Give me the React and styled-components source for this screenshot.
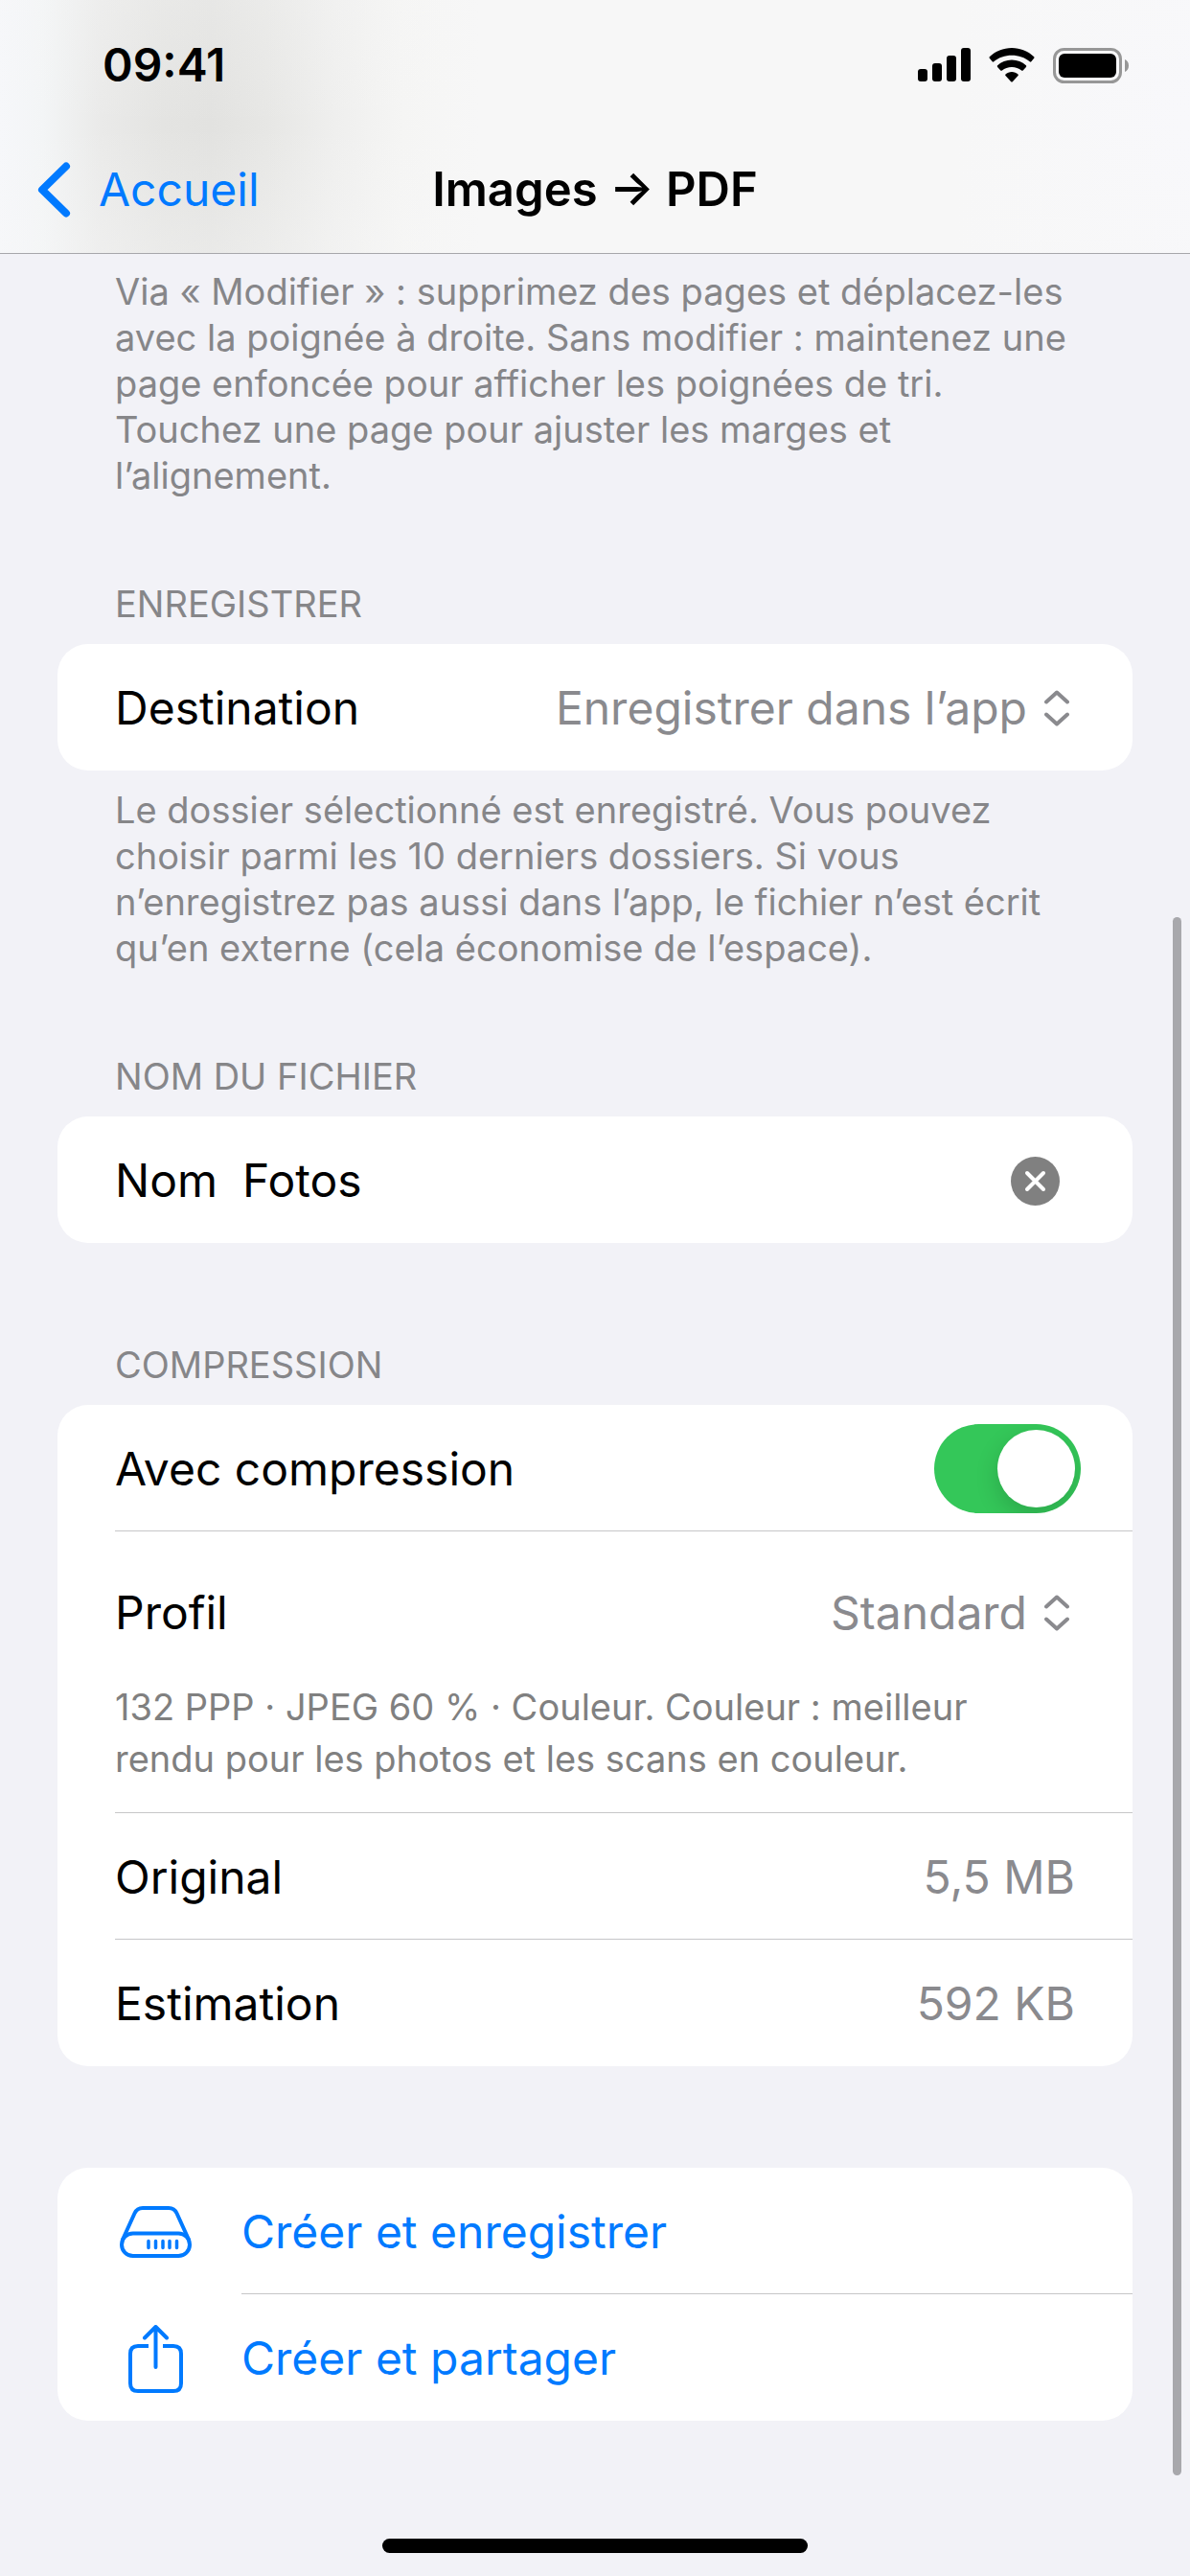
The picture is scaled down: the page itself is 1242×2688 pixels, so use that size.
import React, { useState } from 'react';
import styled, { createGlobalStyle } from 'styled-components';

const GlobalStyle = createGlobalStyle`
  * {
    box-sizing: border-box;
  }

  body {
    margin: 0;
    background-color: #f2f2f7;
    font-family: Inter, "Liberation Sans", sans-serif;
    font-size: 48px;
    line-height: 60px;
    color: #000;
  }

  button, input, select {
    margin: 0;
    padding: 0;
    border: 0;
    background: none;
    font: inherit;
    color: inherit;
  }
`;

const Screen = styled.div`
  position: relative;
  display: flex;
  flex-direction: column;
  min-height: 100vh;
`;

const Header = styled.header`
  border-bottom: 1px solid #a7a7ab;
  background:
    linear-gradient(180deg, rgba(247, 247, 247, 0.25), rgba(247, 247, 247, 0) 50%, rgba(247, 247, 247, 0.35)),
    linear-gradient(90deg, #f6f7fa, #f3f5f6 45px, #eaeae9 105px, #e4e4e2 170px, #e2e2e0 220px, #e7e7e5 280px, #efefee 350px, #f5f5f4 420px, #f7f7f7 500px, #f7f7f7 80%, #f8f8fb);
`;

const StatusBar = styled.div`
  display: flex;
  align-items: center;
  justify-content: space-between;
  height: 132px;
  padding: 4px 63px 0 107px;
  font-weight: 600;
`;

const StatusIcons = styled.div`
  display: flex;
  align-items: center;
  gap: 19px;
`;

const NavBar = styled.nav`
  display: grid;
  grid-template-columns: 1fr auto 1fr;
  align-items: center;
  height: 132px;
  padding: 0 39px;
`;

const BackLink = styled.a`
  display: flex;
  align-items: center;
  gap: 28px;
  color: #007aff;
  text-decoration: none;
`;

const Title = styled.h1`
  margin: 0;
  font-size: 49px;
  font-weight: 600;
`;

const Content = styled.main`
  flex: 1;
  padding: 15px 60px 0;
`;

const Section = styled.section`
  margin-bottom: ${({ $gap }) => $gap || 86}px;
`;

const SectionTitle = styled.h2`
  margin: 0;
  padding: 0 60px 18px;
  font-size: 38px;
  font-weight: 400;
  line-height: 48px;
  color: #868689;
  text-transform: uppercase;
`;

const Note = styled.p`
  margin: 0;
  padding: ${({ $top }) => $top}px 52px 0 60px;
  font-size: 38px;
  line-height: 48px;
  color: #868689;
`;

const Card = styled.div`
  overflow: hidden;
  border-radius: 32px;
  background-color: #fff;
`;

const Row = styled.div`
  display: flex;
  align-items: center;
  height: 132px;
  margin-left: 60px;
  padding-top: 2px;
  padding-right: ${({ $right }) => $right || 60}px;
  border-bottom: ${({ $last }) => ($last ? 'none' : '1px solid #c6c6c8')};
`;

const ProfileRow = styled.div`
  margin-left: 60px;
  padding: 19px 0 29px;
  border-bottom: 1px solid #c6c6c8;
`;

const ProfileLine = styled.div`
  display: flex;
  align-items: center;
  height: 132px;
  padding-right: 66px;
`;

const ProfileHint = styled.p`
  margin: 0;
  padding: 5px 60px 0 0;
  font-size: 38px;
  line-height: 54px;
  color: #808080;
`;

const Value = styled.span`
  margin-left: auto;
  color: #8a8a8e;
`;

const Picker = styled.select`
  flex: 1;
  min-width: 0;
  height: 72px;
  margin-right: 18px;
  appearance: none;
  outline: none;
  color: #8a8a8e;
  text-align-last: right;
`;

const NameInput = styled.input`
  flex: 1;
  min-width: 0;
  margin-left: 26px;
  outline: none;
`;

const ClearButton = styled.button`
  display: flex;
`;

const Toggle = styled.input`
  appearance: none;
  width: 153px;
  height: 93px;
  margin: 0 0 0 auto;
  padding: 6px;
  overflow: hidden;
  border-radius: 47px;
  background-color: ${({ checked }) => (checked ? '#34c759' : '#e9e9eb')};

  &::before {
    content: '';
    display: block;
    width: 81px;
    height: 81px;
    margin-left: ${({ checked }) => (checked ? 'auto' : '0')};
    border-radius: 50%;
    background-color: #fff;
    box-shadow: 0 9px 24px rgba(0, 0, 0, 0.16);
  }
`;

const ActionButton = styled.button`
  display: flex;
  align-items: center;
  width: 100%;
  height: 132px;
  padding-top: 2px;
  padding-left: 60px;
  color: #007aff;
  text-align: left;
`;

const ActionIcon = styled.span`
  display: flex;
  justify-content: center;
  width: 84px;
  margin-right: 48px;
`;

const ActionLabel = styled.span`
  display: flex;
  flex: 1;
  align-items: center;
  align-self: stretch;
  border-bottom: ${({ $last }) => ($last ? 'none' : '1px solid #c6c6c8')};
`;

const HomeIndicator = styled.div`
  width: 444px;
  height: 15px;
  margin: 0 auto 24px;
  border-radius: 8px;
  background-color: #000;
`;

const ScrollThumb = styled.div`
  position: absolute;
  top: 957px;
  right: 9px;
  bottom: 105px;
  width: 9px;
  border-radius: 5px;
  background-color: #a8a8ac;
`;

const SignalIcon = () => (
  <svg width="55" height="36" viewBox="0 0 55 36">
    <rect x="0" y="22" width="10" height="13" rx="3" />
    <rect x="15" y="16" width="10" height="19" rx="3" />
    <rect x="30" y="8" width="10" height="27" rx="3" />
    <rect x="45" y="0" width="10" height="35" rx="3" />
  </svg>
);

const WifiIcon = () => (
  <svg width="48" height="36" viewBox="0 0 48 36">
    <path d="M24 0C33 0 41 3.500 47.200 9.200Q48 10 47.200 10.800L44.300 14.300Q43.500 15 42.700 14.300C37.600 9.900 31.200 7.700 24 7.700S10.400 9.900 5.300 14.300Q4.500 15 3.700 14.300L0.800 10.800Q0 10 0.800 9.200C7 3.500 15 0 24 0Z" />
    <path d="M24 12.500C29.800 12.500 34.900 14.700 38.900 18.300Q39.700 19.100 38.900 19.900L35.700 23.500Q34.900 24.200 34.100 23.500C31.400 21.300 27.900 20 24 20S16.600 21.300 13.900 23.500Q13.100 24.200 12.300 23.500L9.100 19.900Q8.300 19.100 9.100 18.300C13.100 14.700 18.200 12.500 24 12.500Z" />
    <path d="M24 25C26.500 25 28.800 25.900 30.500 27.400Q31.300 28.200 30.500 29L24.800 35.200Q24 36 23.200 35.200L17.500 29Q16.700 28.200 17.500 27.400C19.200 25.900 21.500 25 24 25Z" />
  </svg>
);

const BatteryIcon = () => (
  <svg width="80" height="37" viewBox="0 0 80 37">
    <rect x="1.500" y="1.500" width="69" height="34" rx="10" fill="none" stroke="#979797" strokeWidth="3" />
    <rect x="6" y="6" width="60" height="25" rx="6" />
    <path d="M75 12C77.500 13 79 15.500 79 18.500S77.500 24 75 25Z" fill="#979797" />
  </svg>
);

const BackIcon = () => (
  <svg width="36" height="58" viewBox="0 0 36 58" fill="none" stroke="currentColor" strokeWidth="8" strokeLinecap="round" strokeLinejoin="round">
    <path d="M30 4.500L5 29L30 53.500" />
  </svg>
);

const UpDownIcon = () => (
  <svg width="26" height="38" viewBox="0 0 26 38" fill="none" stroke="#8a8a8e" strokeWidth="4" strokeLinecap="round" strokeLinejoin="round">
    <path d="M2 12.500L13 2.500L24 12.500M2 25.500L13 35.500L24 25.500" />
  </svg>
);

const ClearIcon = () => (
  <svg width="51" height="51" viewBox="0 0 51 51">
    <circle cx="25.500" cy="25.500" r="25.500" fill="#808080" />
    <path d="M17 17L34 34M34 17L17 34" stroke="#fff" strokeWidth="4" strokeLinecap="round" />
  </svg>
);

const DriveIcon = () => (
  <svg width="75" height="54" viewBox="0 0 75 54" fill="none" stroke="currentColor" strokeWidth="4" strokeLinecap="round">
    <rect x="2" y="28.500" width="71" height="23.500" rx="11.750" />
    <path d="M3 35L15.500 7.500Q18 2 24 2H51Q57 2 59.500 7.500L72 35" />
    <path d="M30 36.500V43.500M37.500 36.500V43.500M45 36.500V43.500M52 36.500V43.500M59.500 36.500V43.500" strokeWidth="3.500" />
  </svg>
);

const ShareIcon = () => (
  <svg width="57" height="71" viewBox="0 0 57 71" fill="none" stroke="currentColor" strokeWidth="4" strokeLinejoin="round">
    <path d="M21 22H10Q2 22 2 30V61Q2 69 10 69H47Q55 69 55 61V30Q55 22 47 22H36" />
    <path d="M28.500 44V3M17 13.500L28.500 2L40 13.500" strokeLinecap="round" />
  </svg>
);

const App = () => {
  const [name, setName] = useState('Fotos');
  const [compress, setCompress] = useState(true);

  return (
    <>
      <GlobalStyle />
      <Screen>
        <Header>
          <StatusBar>
            <span>09:41</span>
            <StatusIcons>
              <SignalIcon />
              <WifiIcon />
              <BatteryIcon />
            </StatusIcons>
          </StatusBar>
          <NavBar>
            <BackLink href="#accueil">
              <BackIcon />
              Accueil
            </BackLink>
            <Title>Images → PDF</Title>
          </NavBar>
        </Header>

        <Content>
          <Section>
            <Note $top={0}>
              Via «&nbsp;Modifier&nbsp;»&nbsp;: supprimez des pages et déplacez-les avec la
              poignée à droite. Sans modifier&nbsp;: maintenez une page enfoncée pour afficher
              les poignées de tri. Touchez une page pour ajuster les marges et l’alignement.
            </Note>
          </Section>

          <Section>
            <SectionTitle>Enregistrer</SectionTitle>
            <Card>
              <Row $right={66} $last>
                <label htmlFor="destination">Destination</label>
                <Picker id="destination">
                  <option>Enregistrer dans l’app</option>
                </Picker>
                <UpDownIcon />
              </Row>
            </Card>
            <Note $top={17}>
              Le dossier sélectionné est enregistré. Vous pouvez choisir parmi les 10 derniers
              dossiers. Si vous n’enregistrez pas aussi dans l’app, le fichier n’est écrit qu’en
              externe (cela économise de l’espace).
            </Note>
          </Section>

          <Section $gap={103}>
            <SectionTitle>Nom du fichier</SectionTitle>
            <Card>
              <Row $right={76} $last>
                <label htmlFor="filename">Nom</label>
                <NameInput id="filename" type="text" value={name} onChange={(e) => setName(e.target.value)} />
                <ClearButton type="button" aria-label="Effacer" onClick={() => setName('')}>
                  <ClearIcon />
                </ClearButton>
              </Row>
            </Card>
          </Section>

          <Section $gap={106}>
            <SectionTitle>Compression</SectionTitle>
            <Card>
              <Row $right={54}>
                <label htmlFor="compress">Avec compression</label>
                <Toggle id="compress" type="checkbox" checked={compress} onChange={() => setCompress(!compress)} />
              </Row>
              <ProfileRow>
                <ProfileLine>
                  <label htmlFor="profile">Profil</label>
                  <Picker id="profile">
                    <option>Standard</option>
                  </Picker>
                  <UpDownIcon />
                </ProfileLine>
                <ProfileHint>
                  132 PPP · JPEG 60&nbsp;% · Couleur. Couleur&nbsp;: meilleur rendu pour les photos
                  et les scans en couleur.
                </ProfileHint>
              </ProfileRow>
              <Row>
                <span>Original</span>
                <Value>5,5 MB</Value>
              </Row>
              <Row $last>
                <span>Estimation</span>
                <Value>592 KB</Value>
              </Row>
            </Card>
          </Section>

          <Card>
            <ActionButton type="button">
              <ActionIcon><DriveIcon /></ActionIcon>
              <ActionLabel>Créer et enregistrer</ActionLabel>
            </ActionButton>
            <ActionButton type="button">
              <ActionIcon><ShareIcon /></ActionIcon>
              <ActionLabel $last>Créer et partager</ActionLabel>
            </ActionButton>
          </Card>
        </Content>

        <HomeIndicator />
        <ScrollThumb />
      </Screen>
    </>
  );
};

export default App;
